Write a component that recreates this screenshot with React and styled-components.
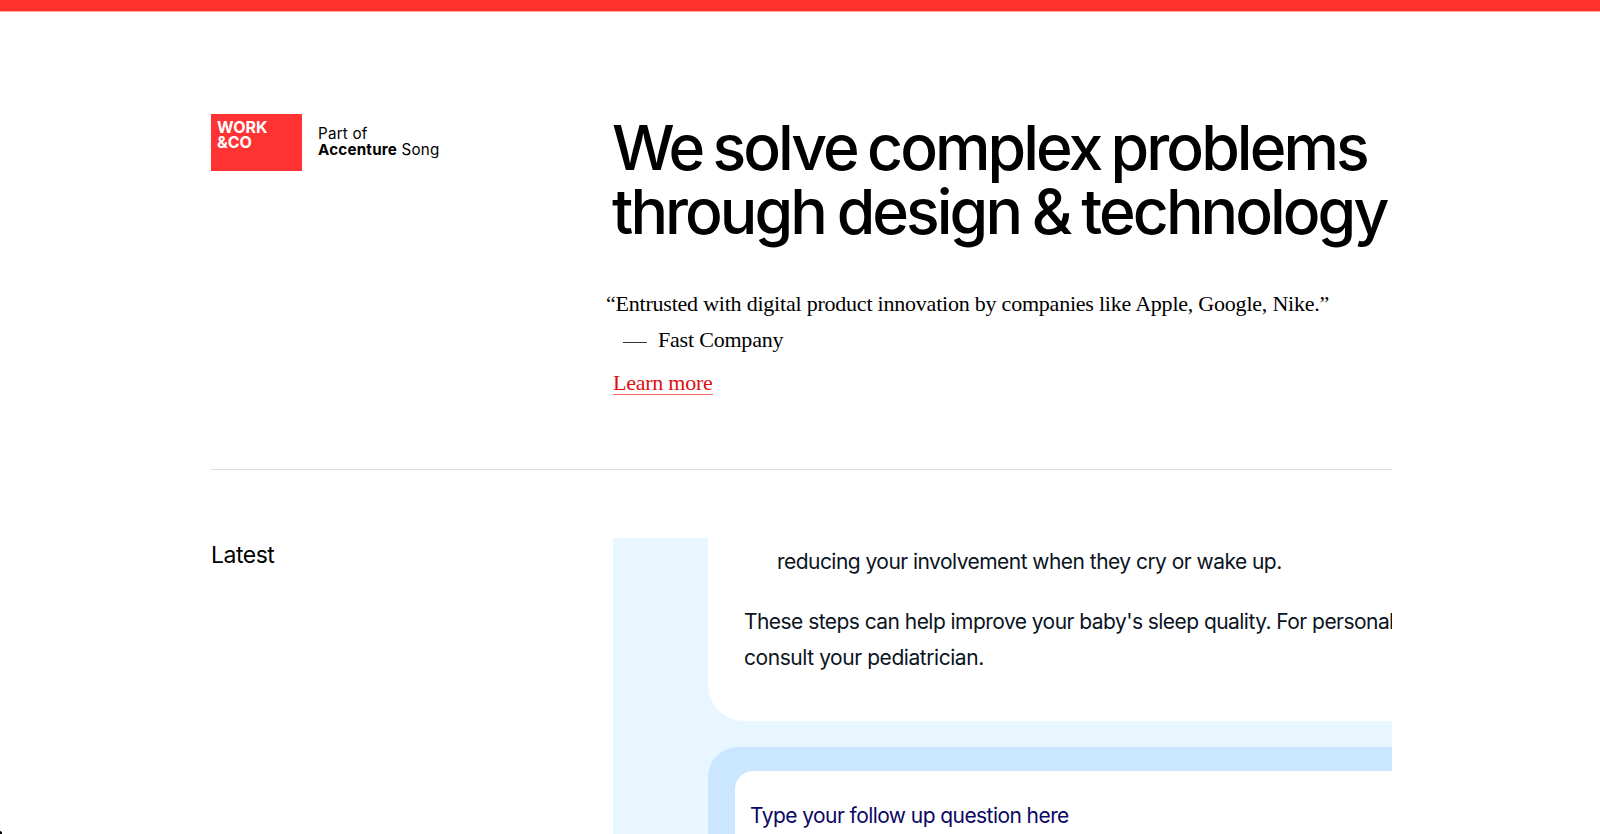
import styled, { createGlobalStyle } from "styled-components";

const GlobalStyle = createGlobalStyle`
  * {
    box-sizing: border-box;
  }

  body {
    margin: 0;
    background-color: #fff;
    color: #000;
    font-family: Inter, "Liberation Sans", sans-serif;
  }

  h1, h2, p {
    margin: 0;
    font-weight: 400;
  }
`;

const Page = styled.div`
  position: relative;
  height: 834px;
  overflow: hidden;
`;

const TopBar = styled.div`
  height: 12px;
  background-color: #ff312c;
  border-bottom: 1px solid #ffa6a3;
`;

const Container = styled.main`
  width: 1181px;
  margin-left: 211px;
`;

const Hero = styled.header`
  display: grid;
  grid-template-columns: 402px 1fr;
  height: 458px;
  padding-top: 102px;
  border-bottom: 1px solid #dcdcdc;
`;

const Brand = styled.div`
  display: flex;
  gap: 16px;
`;

const Logo = styled.div`
  width: 91px;
  height: 57px;
  padding: 6px 0 0 6px;
  background-color: #ff3334;
  color: #fff;
  font-size: 16px;
  font-weight: 700;
  line-height: 15px;
`;

const Tagline = styled.p`
  padding-top: 12px;
  font-size: 15.2px;
  line-height: 16.4px;
  letter-spacing: 0.2px;
  white-space: nowrap;
`;

const TaglineRow = styled.span`
  display: block;
`;

const Intro = styled.div`
  padding-top: 1px;
`;

const Title = styled.h1`
  margin-left: -1px;
  font-size: 62.5px;
  font-weight: 500;
  line-height: 64px;
  white-space: nowrap;
`;

const TitleRow = styled.span`
  display: block;
  letter-spacing: ${(props) => props.$tracking};
  word-spacing: ${(props) => props.$wordGap};
`;

const Quote = styled.p`
  margin: 43px 0 0 -7px;
  font-family: "Liberation Serif", "Times New Roman", serif;
  font-size: 22px;
  line-height: 36px;
  letter-spacing: -0.22px;
  white-space: nowrap;
`;

const Source = styled.p`
  display: flex;
  align-items: center;
  gap: 11px;
  padding-left: 10px;
  font-family: "Liberation Serif", "Times New Roman", serif;
  font-size: 22px;
  line-height: 36px;
  letter-spacing: -0.2px;
`;

const Dash = styled.span`
  width: 24px;
  height: 1px;
  margin-top: 4px;
  background-color: #333;
`;

const LearnMore = styled.a`
  display: inline-block;
  height: 25px;
  margin-top: 12px;
  border-bottom: 1px solid #e66;
  color: #dc0f14;
  font-family: "Liberation Serif", "Times New Roman", serif;
  font-size: 22px;
  line-height: 25px;
  letter-spacing: -0.25px;
  text-decoration: none;
`;

const Latest = styled.section`
  display: grid;
  grid-template-columns: 402px 1fr;
  padding-top: 68px;
`;

const SectionTitle = styled.h2`
  padding-top: 2px;
  font-size: 23px;
  line-height: 30px;
  letter-spacing: -0.5px;
`;

const Preview = styled.div`
  height: 296px;
  padding-left: 95px;
  overflow: hidden;
  background-color: #e8f6ff;
`;

const Answer = styled.div`
  height: 183px;
  padding: 6px 0 0 36px;
  border-bottom-left-radius: 36px;
  background-color: #fff;
  color: #0b1422;
  font-size: 21px;
  line-height: 36px;
  white-space: nowrap;
`;

const AnswerLine = styled.p`
  margin-bottom: ${(props) => props.$gap || 0};
  padding-left: ${(props) => props.$indent || 0};
  letter-spacing: ${(props) => props.$tracking};
`;

const FollowUp = styled.div`
  height: 100px;
  margin-top: 26px;
  padding: 24px 0 0 27px;
  border-top-left-radius: 30px;
  background-color: #cbe7ff;
`;

const FollowUpField = styled.div`
  height: 80px;
  padding: 27px 0 0 15px;
  border-top-left-radius: 18px;
  background-color: #fff;
  color: #0c0764;
  font-size: 21px;
  line-height: 36px;
  letter-spacing: -0.57px;
`;

const Corner = styled.div`
  position: absolute;
  left: 0;
  bottom: 0;
  width: 2px;
  height: 3px;
  border-top-right-radius: 2px;
  background-color: #000;
`;

function App() {
  return (
    <>
      <GlobalStyle />
      <Page>
        <TopBar />
        <Container>
          <Hero>
            <Brand>
              <Logo>
                WORK
                <br />
                &CO
              </Logo>
              <Tagline>
                <TaglineRow>Part of</TaglineRow>
                <TaglineRow>
                  <b>Accenture</b> Song
                </TaglineRow>
              </Tagline>
            </Brand>
            <Intro>
              <Title>
                <TitleRow $tracking="-2.93px" $wordGap="-3.6px">
                  We solve complex problems
                </TitleRow>
                <TitleRow $tracking="-2.95px" $wordGap="-2px">
                  through design &amp; technology
                </TitleRow>
              </Title>
              <Quote>
                “Entrusted with digital product innovation by companies like
                Apple, Google, Nike.”
              </Quote>
              <Source>
                <Dash />
                Fast Company
              </Source>
              <LearnMore href="#">Learn more</LearnMore>
            </Intro>
          </Hero>
          <Latest>
            <SectionTitle>Latest</SectionTitle>
            <Preview>
              <Answer>
                <AnswerLine $indent="33px" $gap="24px" $tracking="-0.54px">
                  reducing your involvement when they cry or wake up.
                </AnswerLine>
                <AnswerLine $tracking="-0.55px">
                  These steps can help improve your baby's sleep quality. For
                  personal
                </AnswerLine>
                <AnswerLine $tracking="-0.44px">
                  consult your pediatrician.
                </AnswerLine>
              </Answer>
              <FollowUp>
                <FollowUpField>Type your follow up question here</FollowUpField>
              </FollowUp>
            </Preview>
          </Latest>
        </Container>
        <Corner />
      </Page>
    </>
  );
}

export default App;
